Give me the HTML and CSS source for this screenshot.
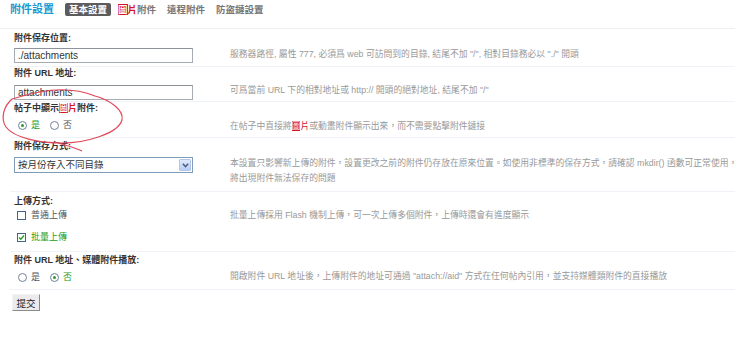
FILE: index.html
```html
<!DOCTYPE html>
<html lang="zh-Hant">
<head>
<meta charset="utf-8">
<title>附件設置</title>
<link rel="stylesheet" href="styles.css">
</head>
<body>
<div class="page">
  <div class="nav">
    <span class="title">附件設置</span>
    <span class="tab active">基本設置</span>
    <span class="tab"><span class="hl">圖</span><span class="red">片</span>附件</span>
    <span class="tab">遠程附件</span>
    <span class="tab">防盜鏈設置</span>
  </div>

  <div class="row r1">
    <div class="label">附件保存位置:</div>
    <div class="ctrl"><div class="input">./attachments</div></div>
    <div class="desc">服務器路徑, 屬性 777, 必須爲 web 可訪問到的目錄, 結尾不加 "/", 相對目錄務必以 "./" 開頭</div>
  </div>

  <div class="row r2">
    <div class="label">附件 URL 地址:</div>
    <div class="ctrl"><div class="input">attachments</div></div>
    <div class="desc">可爲當前 URL 下的相對地址或 http:// 開頭的絕對地址, 結尾不加 "/"</div>
  </div>

  <div class="row r3">
    <div class="label">帖子中顯示<span class="hl">圖</span><span class="red">片</span>附件:</div>
    <div class="ctrl">
      <div class="choices">
        <span class="opt on"><span class="radio checked"></span>是</span>
        <span class="opt"><span class="radio"></span>否</span>
      </div>
    </div>
    <div class="desc">在帖子中直接將<span class="hl">圖</span><span class="red">片</span>或動畫附件顯示出來，而不需要點擊附件鏈接</div>
  </div>

  <div class="row r4">
    <div class="label">附件保存方式:</div>
    <div class="ctrl">
      <div class="select">
        <span class="sel-text">按月份存入不同目錄</span>
        <span class="sel-btn"><svg width="7" height="5" viewBox="0 0 7 5"><path d="M0.8 0.8 L3.5 3.6 L6.2 0.8" fill="none" stroke="#4a5f86" stroke-width="1.5"/></svg></span>
      </div>
    </div>
    <div class="desc">本設置只影響新上傳的附件，設置更改之前的附件仍存放在原來位置。如使用非標準的保存方式，請確認 mkdir() 函數可正常使用，否則<br>將出現附件無法保存的問題</div>
  </div>

  <div class="row r5">
    <div class="label">上傳方式:</div>
    <div class="ctrl">
      <div class="check-line"><span class="box"></span>普通上傳</div>
      <div class="check-line on second"><span class="box checked"><svg width="7" height="7" viewBox="0 0 7 7"><path d="M1 3.5 L2.8 5.3 L6 1.5" fill="none" stroke="#21a121" stroke-width="1.4"/></svg></span>批量上傳</div>
    </div>
    <div class="desc">批量上傳採用 Flash 機制上傳，可一次上傳多個附件，上傳時還會有進度顯示</div>
  </div>

  <div class="row r6">
    <div class="label">附件 URL 地址、媒體附件播放:</div>
    <div class="ctrl">
      <div class="choices">
        <span class="opt"><span class="radio"></span>是</span>
        <span class="opt on"><span class="radio checked"></span>否</span>
      </div>
    </div>
    <div class="desc">開啟附件 URL 地址後，上傳附件的地址可通過 "attach://aid" 方式在任何帖內引用，並支持媒體類附件的直接播放</div>
  </div>

  <div class="actions"><button class="submit" type="button">提交</button></div>

  <svg class="scribble" width="140" height="160" viewBox="0 0 140 160">
    <path d="M12 99 C4 106, 0 118, 6 127 C14 138, 40 143, 62 143 C85 143, 118 134, 122 120 C124 110, 110 100, 95 96 C80 90, 60 88, 40 92 C28 94, 18 97, 12 99" fill="none" stroke="#e2485a" stroke-width="1.2"/>
    <path d="M58 143 C68 146, 76 148, 82 151" fill="none" stroke="#e2485a" stroke-width="1.1"/>
  </svg>
</div>
</body>
</html>
```
FILE: styles.css
```css
html, body {
  margin: 0;
  padding: 0;
  background: #fff;
  overflow: hidden;
}
body {
  font-family: "Liberation Sans", "Noto Sans CJK TC", sans-serif;
  font-size: 9px;
  color: #333;
}
.page {
  position: relative;
  width: 735px;
  height: 354px;
}
.nav {
  display: flex;
  align-items: flex-start;
  gap: 3px;
  height: 25px;
  padding: 3px 0 0 10px;
  border-bottom: 1px solid #eceef2;
}
.title {
  font-size: 11px;
  line-height: 13px;
  font-weight: bold;
  color: #1a9ad0;
  margin-right: 8px;
}
.tab {
  font-size: 9.5px;
  line-height: 13px;
  font-weight: bold;
  color: #777;
  padding: 0 4px;
  border-radius: 2px;
}
.tab.active {
  background: #5c5c5c;
  color: #fff;
}
.hl {
  background: #d8141c;
  color: #fff;
}
.red {
  color: #d8141c;
}
.row {
  display: grid;
  grid-template-columns: 216px auto;
  margin-left: 10px;
  padding-left: 4px;
  border-bottom: 1px solid #eff2f6;
}
.label {
  grid-column: 1 / 3;
  font-weight: bold;
  line-height: 12px;
  color: #333;
}
.ctrl {
  grid-column: 1;
}
.desc {
  grid-column: 2;
  align-self: center;
  font-size: 8.8px;
  line-height: 12px;
  color: #999;
  white-space: nowrap;
}
.input {
  box-sizing: border-box;
  width: 179px;
  height: 15px;
  border: 1px solid #a7abb2;
  border-top-color: #8e939b;
  padding-left: 3px;
  font-size: 10px;
  line-height: 13px;
  color: #333;
}
.choices {
  display: flex;
  line-height: 12px;
  color: #555;
}
.opt {
  display: flex;
  align-items: center;
  font-size: 9px;
}
.opt.on {
  color: #1a9a1a;
}
.opt:first-child {
  margin-left: 4px;
  margin-right: 10px;
}
.radio {
  box-sizing: border-box;
  width: 9px;
  height: 9px;
  border: 1px solid #6f8399;
  border-radius: 50%;
  background: #fff;
  margin-right: 4px;
  display: flex;
  align-items: center;
  justify-content: center;
}
.radio.checked::after {
  content: "";
  width: 3px;
  height: 3px;
  border-radius: 50%;
  background: #2c9a2c;
}
.select {
  box-sizing: border-box;
  width: 179px;
  height: 16px;
  border: 1px solid #7f9db9;
  display: flex;
  align-items: center;
  justify-content: space-between;
}
.sel-text {
  padding-left: 3px;
  font-size: 9.5px;
  color: #333;
  line-height: 14px;
}
.sel-btn {
  width: 12px;
  height: 12px;
  margin-right: 1px;
  border: 1px solid #b3c6e8;
  border-radius: 1px;
  background: linear-gradient(#e0e9fb, #b9cdf3);
  display: flex;
  align-items: center;
  justify-content: center;
  box-sizing: border-box;
}
.check-line {
  display: flex;
  align-items: center;
  line-height: 12px;
  color: #555;
  margin-left: 3px;
}
.check-line.on {
  color: #1a9a1a;
}
.check-line.second {
  margin-top: 10px;
}
.box {
  box-sizing: border-box;
  width: 9px;
  height: 9px;
  border: 1px solid #45648a;
  background: #fff;
  margin-right: 5px;
  display: flex;
  align-items: center;
  justify-content: center;
}
.r1 { padding-top: 3px; padding-bottom: 3px; }
.r1 .ctrl { margin-top: 4px; }
.r2 { padding-top: 0; padding-bottom: 1px; }
.r2 .ctrl { margin-top: 6px; }
.r3 { padding-top: 0; padding-bottom: 5px; }
.r3 .ctrl { margin-top: 5px; }
.r3 .desc { margin-top: 6px; }
.r4 { padding-top: 2px; padding-bottom: 5px; }
.r4 .ctrl { margin-top: 5px; }
.r4 .desc { align-self: start; margin-top: 4px; line-height: 15px; }
.r5 { padding-top: 3px; padding-bottom: 8px; }
.r5 .ctrl { margin-top: 2px; }
.r5 .desc { align-self: start; margin-top: 2px; }
.r6 { padding-top: 2px; padding-bottom: 6px; }
.r6 .ctrl { margin-top: 5px; }
.r6 .desc { margin-top: 2px; }
.actions {
  padding: 4px 0 0 12px;
}
.submit {
  box-sizing: border-box;
  width: 28px;
  height: 17px;
  padding: 0;
  margin: 0;
  font-family: "Liberation Sans", "Noto Sans CJK TC", sans-serif;
  font-size: 9.5px;
  color: #222;
  background: #ebebeb;
  border: 1px solid;
  border-color: #f4f4f4 #8a8a8a #8a8a8a #f4f4f4;
}
.scribble {
  position: absolute;
  left: 0;
  top: 0;
  pointer-events: none;
}
```
